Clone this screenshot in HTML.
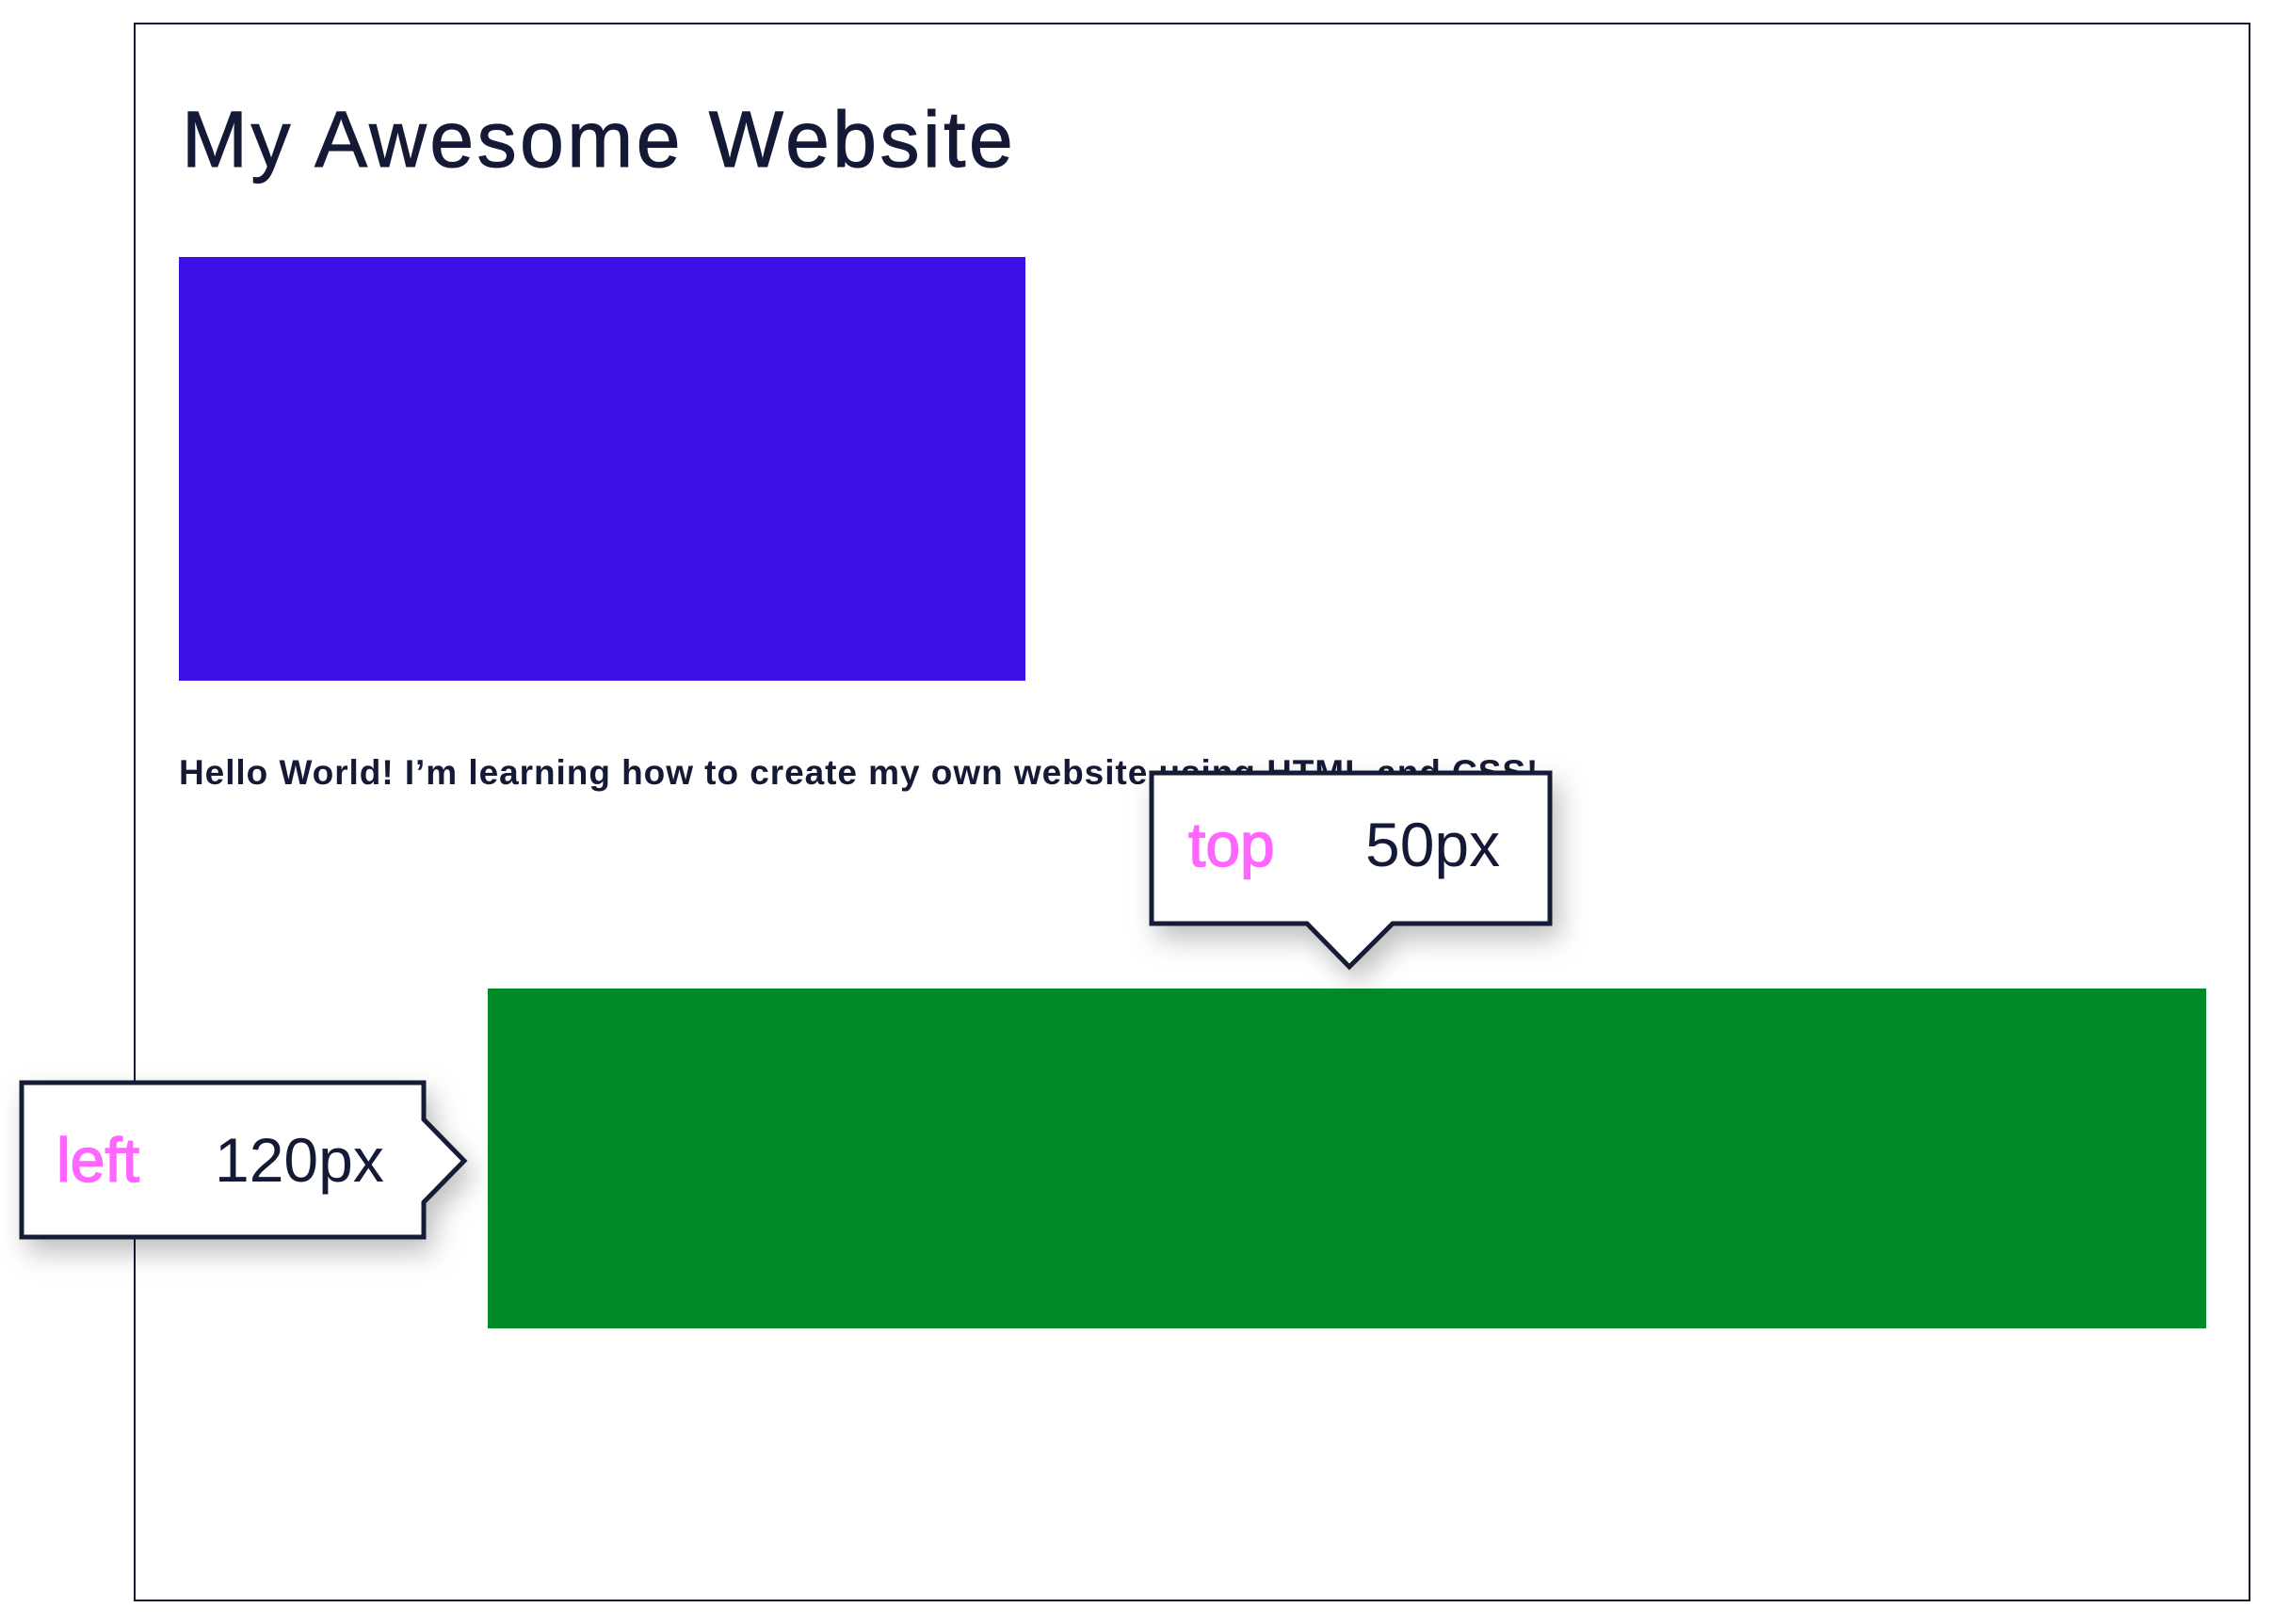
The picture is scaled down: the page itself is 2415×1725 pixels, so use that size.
<!DOCTYPE html>
<html><head><meta charset="utf-8"><style>
html,body{margin:0;padding:0;background:#fff;}
body{width:2415px;height:1725px;position:relative;overflow:hidden;font-family:"Liberation Sans",sans-serif;color:#141a36;}
.frame{position:absolute;left:142px;top:24px;width:2248px;height:1677px;border:2px solid #141a36;box-sizing:border-box;}
h1{position:absolute;left:193px;top:98px;margin:0;font-size:84px;font-weight:normal;line-height:100px;white-space:nowrap;letter-spacing:3.5px;-webkit-text-stroke:1px #141a36;}
.blue{position:absolute;left:190px;top:273px;width:899px;height:450px;background:#3d10e6;}
.txt{position:absolute;left:190px;top:797px;font-size:37px;font-weight:bold;white-space:nowrap;line-height:48px;letter-spacing:0.95px;}
.green{position:absolute;left:518px;top:1050px;width:1825px;height:361px;background:#008a28;}
svg{position:absolute;left:0;top:0;}
</style></head><body>
<div class="frame"></div>
<h1>My Awesome Website</h1>
<div class="blue"></div>
<div class="txt">Hello World! I’m learning how to create my own website using HTML and CSS!</div>
<div class="green"></div>
<svg width="2415" height="1725" viewBox="0 0 2415 1725">
<defs><filter id="sh" x="-20%" y="-20%" width="150%" height="160%"><feDropShadow dx="8" dy="14" stdDeviation="14" flood-color="#000" flood-opacity="0.25"/></filter></defs>
<path d="M1223,821 H1646 V981 H1479 L1433,1027 L1388,981 H1223 Z" fill="#fff" stroke="#141a36" stroke-width="5" filter="url(#sh)"/>
<text x="1262" y="920" font-family="Liberation Sans, sans-serif" font-size="66" fill="#ff66ff" stroke="#ff66ff" stroke-width="1.5">top</text>
<text x="1450" y="920" font-family="Liberation Sans, sans-serif" font-size="66" fill="#141a36">50px</text>
<path d="M23,1150 H450 V1189 L493,1233 L450,1277 V1314 H23 Z" fill="#fff" stroke="#141a36" stroke-width="5" filter="url(#sh)"/>
<text x="60" y="1255" font-family="Liberation Sans, sans-serif" font-size="66" fill="#ff66ff" stroke="#ff66ff" stroke-width="1.5">left</text>
<text x="228" y="1255" font-family="Liberation Sans, sans-serif" font-size="66" fill="#141a36">120px</text>
</svg>
</body></html>
